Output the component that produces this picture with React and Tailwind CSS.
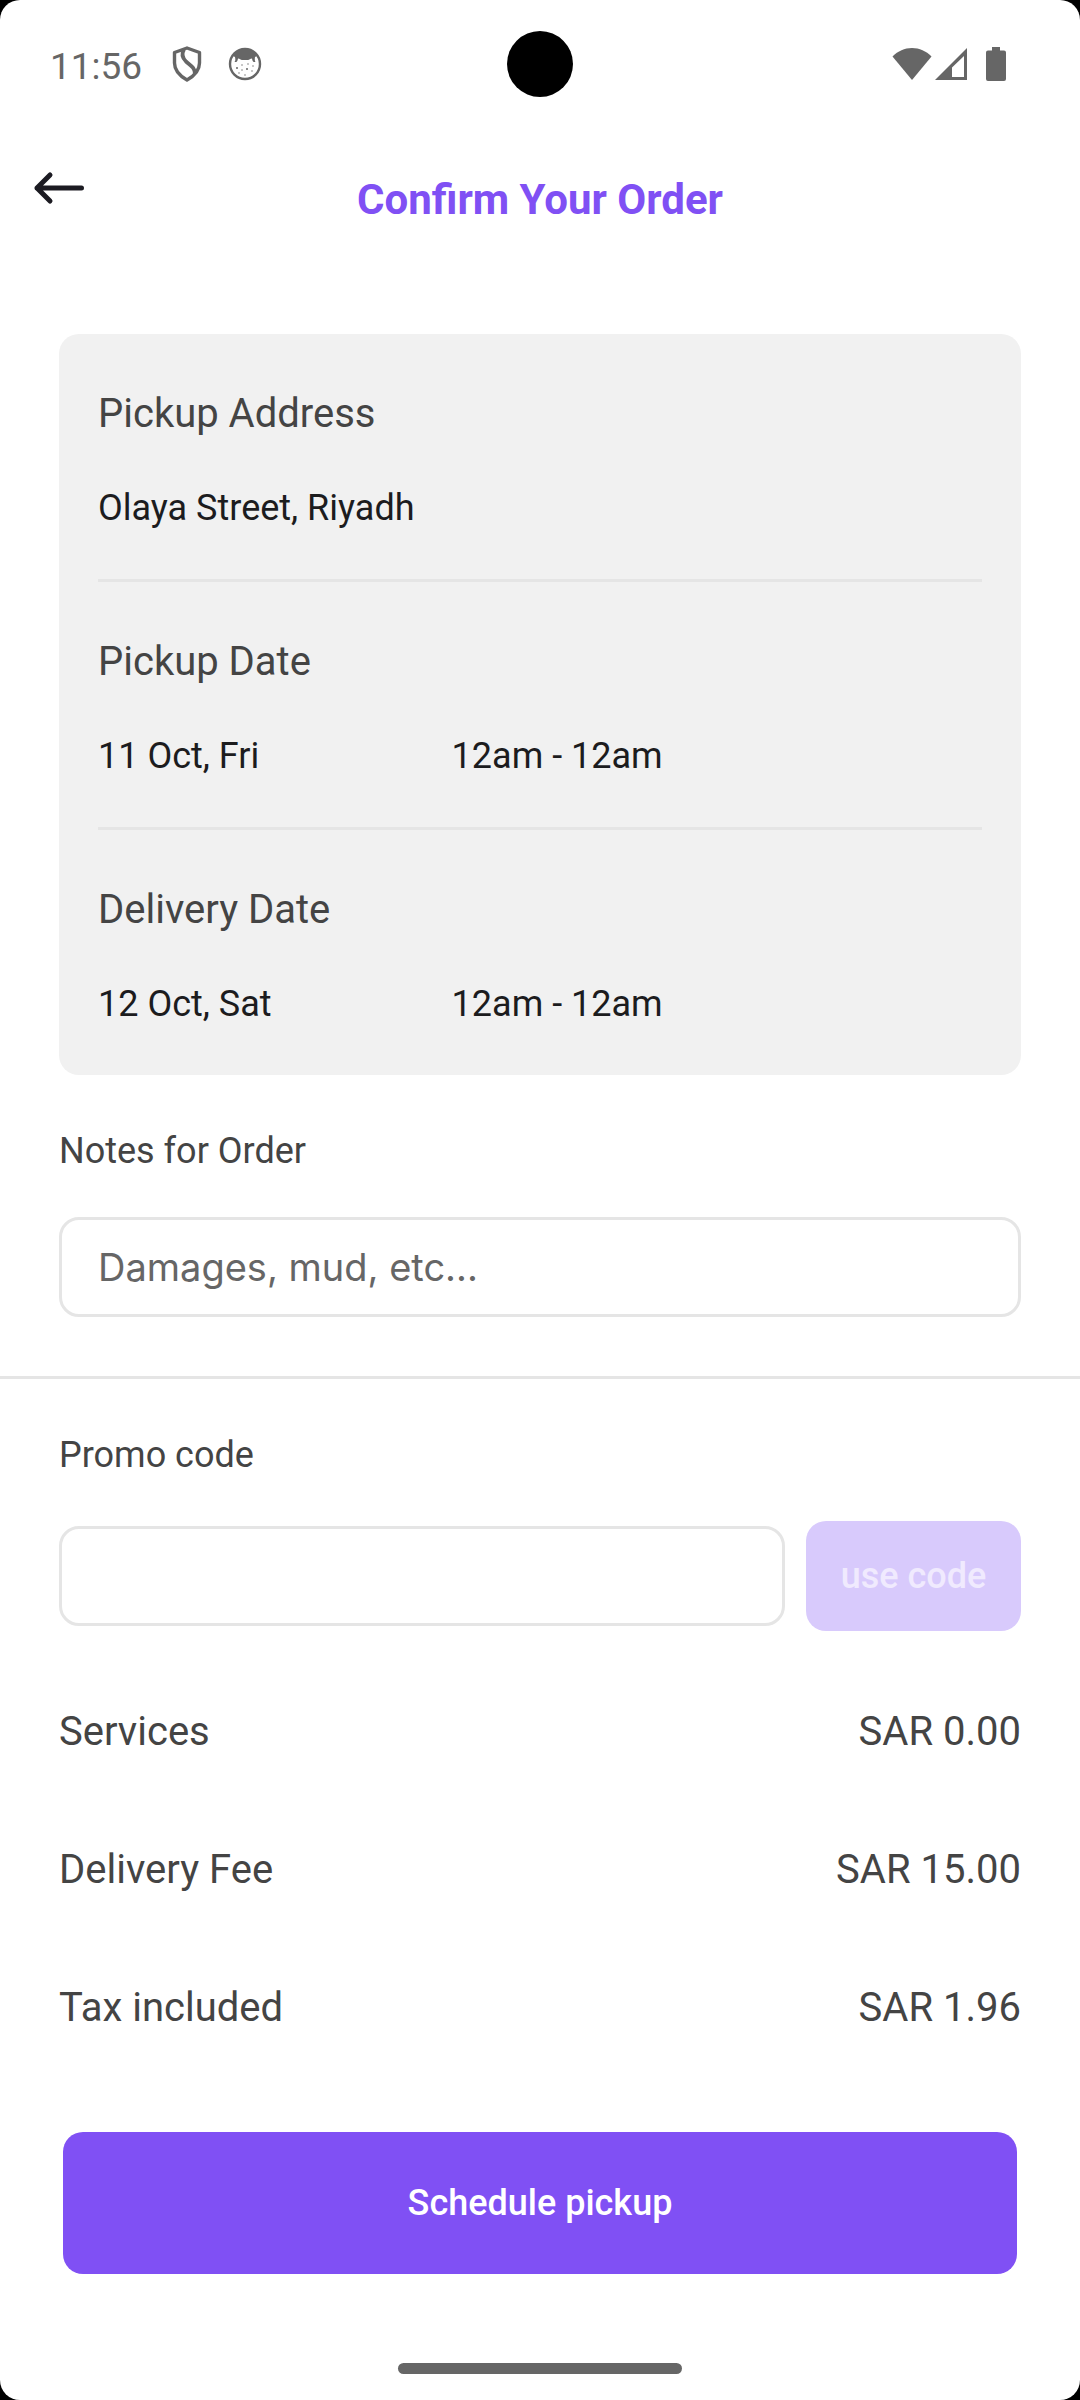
// src/screens/ConfirmOrder.jsx
import React, { useState } from "react";

const dates = [
  { title: "Pickup Date", day: "11 Oct, Fri", slot: "12am - 12am" },
  { title: "Delivery Date", day: "12 Oct, Sat", slot: "12am - 12am" },
];

const fees = [
  { label: "Services", amount: "SAR 0.00" },
  { label: "Delivery Fee", amount: "SAR 15.00" },
  { label: "Tax included", amount: "SAR 1.96" },
];

const StatusBar = () => (
  <div className="relative flex h-32 items-center justify-between pl-[50px] pr-[74px] text-[#666666]">
    <div className="flex items-center">
      <span className="pt-1 font-[Roboto,sans-serif] text-[37px] leading-none">
        11:56
      </span>
      <svg className="ml-[30px] h-9 w-[30px]" viewBox="0 0 30 36" fill="none">
        <path
          d="M15 2 27.500 6.500V17c0 7-4.500 12.500-12.500 17C7 29.500 2.500 24 2.500 17V6.500Z"
          stroke="currentColor"
          strokeWidth="3.400"
          strokeLinejoin="round"
        />
        <path
          d="M12 3.500c-2.500 4-1.500 8.500 2 12 4.500 4 9 6 9 12.500"
          stroke="currentColor"
          strokeWidth="3.800"
        />
      </svg>
      <svg className="ml-[26px] h-[34px] w-[34px]" viewBox="0 0 34 34">
        <circle
          cx="17"
          cy="17"
          r="15"
          fill="none"
          stroke="currentColor"
          strokeWidth="2.400"
        />
        <path
          d="M5 9C8 4 12 2 17 2s9 2 12 7l-2 1c-.5 3 0 4 .5 5-2 .5-3-.5-3.500-3.500-2 0-2.500 1.500-4 1.500h-6c-1.500 0-2-1.500-4-1.500-.5 3-1.500 4-3.500 3.500 1-1 1-2 .5-5Z"
          fill="currentColor"
        />
        <g fill="currentColor">
          <circle cx="9" cy="21" r="1" />
          <circle cx="14" cy="18" r=".7" />
          <circle cx="20" cy="17" r=".7" />
          <circle cx="25" cy="19" r=".7" />
          <circle cx="19" cy="22" r="1" />
          <circle cx="14" cy="23" r=".7" />
          <circle cx="24" cy="24" r=".7" />
          <circle cx="11" cy="26" r=".7" />
          <circle cx="17" cy="28" r=".7" />
        </g>
      </svg>
    </div>

    {/* front camera */}
    <div className="absolute left-1/2 top-[31px] size-[66px] -translate-x-1/2 rounded-full bg-black" />

    <div className="flex items-center">
      <svg className="h-[34px] w-10" viewBox="0 0 40 34" fill="currentColor">
        <path d="M20 33 .5 9.500C6 4 12.500 1 20 1s14 3 19.500 8.500Z" />
      </svg>
      <svg className="ml-0.5 h-[34px] w-[34px]" viewBox="0 0 34 34">
        <path
          d="M33 1v32H1ZM30 9 18 20.500V30h12Z"
          fill="currentColor"
          fillRule="evenodd"
        />
      </svg>
      <svg
        className="ml-[18px] h-[34px] w-5"
        viewBox="0 0 20 34"
        fill="currentColor">
        <path d="M6 0h8v3.500h4a2 2 0 0 1 2 2V32a2 2 0 0 1-2 2H2a2 2 0 0 1-2-2V5.500a2 2 0 0 1 2-2h4Z" />
      </svg>
    </div>
  </div>
);

const App = () => {
  const [notes, setNotes] = useState("");
  const [promo, setPromo] = useState("");

  return (
    <div className="min-h-screen bg-black">
      <div className="flex min-h-screen flex-col rounded-[20px] bg-white font-[Roboto,sans-serif] text-[#444444]">
        <StatusBar />

        <header className="grid grid-cols-[1fr_auto_1fr] items-start px-8 pt-7">
          <button
            type="button"
            aria-label="Back"
            className="flex h-16 w-16 items-center">
            <svg
              className="h-9 w-[54px]"
              viewBox="0 0 54 36"
              fill="none"
              stroke="#1c1b22"
              strokeWidth="5"
              strokeLinecap="round"
              strokeLinejoin="round">
              <path d="M49.500 18H5M18 5 5 18l13 13" />
            </svg>
          </button>
          <h1 className="pt-4 text-[42px] font-bold leading-[56px] text-[#8050f4]">
            Confirm Your Order
          </h1>
        </header>

        <main className="flex flex-col pt-[106px]">
          <section className="mx-[59px] rounded-[20px] bg-[#f1f1f1] px-[39px] divide-y-3 divide-[#e5e5e5]">
            <div className="pt-14 pb-[49px]">
              <h2 className="text-[40px] leading-12">Pickup Address</h2>
              <p className="mt-12 text-[36px] leading-11 text-[#1c1c1e]">
                Olaya Street, Riyadh
              </p>
            </div>
            {dates.map((item) => (
              <div key={item.title} className="pt-14 pb-[49px]">
                <h2 className="text-[40px] leading-12">{item.title}</h2>
                <div className="mt-12 grid grid-cols-[2fr_3fr] text-[36px] leading-11 text-[#1c1c1e]">
                  <p>{item.day}</p>
                  <p>{item.slot}</p>
                </div>
              </div>
            ))}
          </section>

          <div className="flex flex-col px-[59px] pt-[54px] pb-[59px]">
            <label htmlFor="notes" className="text-[36px] leading-11">
              Notes for Order
            </label>
            <input
              id="notes"
              type="text"
              value={notes}
              onChange={(e) => setNotes(e.target.value)}
              placeholder="Damages, mud, etc..."
              className="mt-11 h-[100px] rounded-[20px] border-3 border-[#e5e5e5] px-9 font-[Inter,sans-serif] text-[38px] placeholder:text-[#666666]"
            />
          </div>

          <hr className="border-t-3 border-[#e5e5e5]" />

          <div className="flex flex-col px-[59px] pt-[54px]">
            <label htmlFor="promo" className="text-[36px] leading-11">
              Promo code
            </label>
            <div className="mt-11 flex items-center gap-[21px]">
              <input
                id="promo"
                type="text"
                value={promo}
                onChange={(e) => setPromo(e.target.value)}
                className="h-[100px] min-w-0 flex-1 rounded-[20px] border-3 border-[#e5e5e5] px-9 font-[Inter,sans-serif] text-[38px]"
              />
              <button
                type="button"
                disabled={!promo}
                className="h-[110px] w-[215px] rounded-[20px] bg-[#8050f4] text-[36px] font-medium text-white disabled:bg-[#d8cafc] disabled:text-[#f0eafe]">
                use code
              </button>
            </div>
          </div>

          <dl className="flex flex-col gap-[90px] px-[59px] pt-[77px] text-[40px] leading-12">
            {fees.map((fee) => (
              <div key={fee.label} className="flex justify-between">
                <dt>{fee.label}</dt>
                <dd>{fee.amount}</dd>
              </div>
            ))}
          </dl>

          <button
            type="button"
            className="mx-[63px] mt-[100px] h-[142px] rounded-[20px] bg-[#8050f4] text-[36px] font-medium text-white">
            Schedule pickup
          </button>
        </main>

        <div className="mx-auto mt-auto mb-[26px] h-[11px] w-[284px] rounded-full bg-[#666666]" />
      </div>
    </div>
  );
};

export default App;
